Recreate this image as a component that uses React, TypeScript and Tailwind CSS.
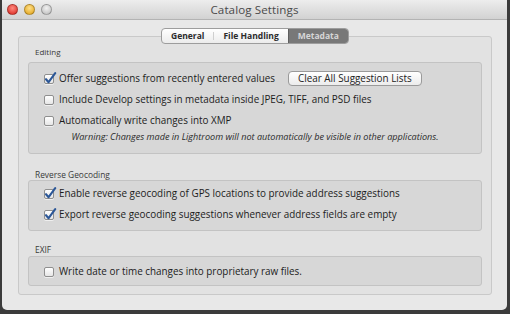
import React from 'react';

const font = { fontFamily: '"Open Sans", "DejaVu Sans", sans-serif' };

function Check({ checked }: { checked?: boolean }) {
  return (
    <div className="relative w-[10px] h-[10px] shrink-0 rounded-[2px] border border-[#8f8f8f] bg-gradient-to-b from-white to-[#e6e6e6] shadow-[0_1px_0_rgba(255,255,255,0.6)]">
      {checked && (
        <svg className="absolute -top-[3px] -left-[1px]" width="13" height="13" viewBox="0 0 13 13">
          <path d="M2 7.2 L4.6 10.2 L11.2 1.2" fill="none" stroke="#2c5797" strokeWidth="2.1" strokeLinecap="round" strokeLinejoin="round" />
        </svg>
      )}
    </div>
  );
}

function Row({ checked, label, children }: { checked?: boolean; label: string; children?: React.ReactNode }) {
  return (
    <div className="flex items-center h-[21px] pl-[15px]">
      <Check checked={checked} />
      <span className="ml-[5px] text-[9.9px] text-[#1c1c1c] whitespace-nowrap">{label}</span>
      {children}
    </div>
  );
}

function Light({ color }: { color: string }) {
  return <div className={`w-[11px] h-[11px] rounded-full border border-black/25 ${color}`} />;
}

export default function App() {
  return (
    <div className="w-[510px] h-[314px] bg-[#3b3b3b] pl-[2px] pr-[3px] pb-[4px] overflow-hidden" style={font}>
      <div className="flex flex-col h-full rounded-b-[5px] bg-[#e8e8e8]">
        {/* title bar */}
        <div className="grid grid-cols-[1fr_auto_1fr] items-center h-[20px] bg-gradient-to-b from-[#ededed] to-[#d2d2d2] border-b border-[#b3b3b3]">
          <div className="flex items-center gap-[6px] pl-[5px]">
            <Light color="bg-[radial-gradient(circle_at_50%_35%,#ff8a80,#d9241c)]" />
            <Light color="bg-[radial-gradient(circle_at_50%_35%,#ffe08a,#e0a014)]" />
            <Light color="bg-[radial-gradient(circle_at_50%_35%,#f2f2f2,#b9b9b9)]" />
          </div>
          <div className="text-[11.6px] text-[#4a4a4a] tracking-[0.1px]">Catalog Settings</div>
          <div />
        </div>

        <div className="pt-[8px] pl-[16px] pr-[15px]">
          {/* tabs */}
          <div className="relative z-10 flex justify-center">
            <div className="flex h-[16px] rounded-[4px] border border-[#9d9d9d] bg-gradient-to-b from-white to-[#ececec] text-[8.5px] font-bold text-[#2b2b2b] overflow-hidden">
              <div className="flex items-center px-[9px] border-r border-[#cfcfcf] my-[3px]">General</div>
              <div className="flex items-center px-[9px]">File Handling</div>
              <div className="flex items-center px-[9px] bg-[#787878] text-[#d6d6d6] border-l border-[#5f5f5f]">Metadata</div>
            </div>
          </div>

          {/* main box */}
          <div className="-mt-[8px] border border-[#c9c9c9] bg-[#e2e2e2] rounded-[3px] px-[9px] pt-[10px] pb-[8px]">
            <div className="text-[8px] leading-[10px] text-[#3a3a3a] pl-[7px]">Editing</div>
            <div className="mt-[5px] border border-[#c3c3c3] bg-[#d7d7d7] rounded-[3px] pt-[5px] pb-[10px]">
              <Row checked label="Offer suggestions from recently entered values">
                <div className="ml-[13px] flex items-center h-[15px] px-[9px] rounded-[4px] border border-[#9a9a9a] bg-gradient-to-b from-white to-[#ececec] text-[9.9px] text-[#222] whitespace-nowrap">
                  Clear All Suggestion Lists
                </div>
              </Row>
              <Row label="Include Develop settings in metadata inside JPEG, TIFF, and PSD files" />
              <Row label="Automatically write changes into XMP" />
              <div className="h-[12px] leading-[12px] text-center italic text-[9.1px] text-[#2a2a2a] whitespace-nowrap">
                Warning: Changes made in Lightroom will not automatically be visible in other applications.
              </div>
            </div>

            <div className="mt-[16px] text-[8.4px] leading-[10px] text-[#3a3a3a] pl-[7px]">Reverse Geocoding</div>
            <div className="border border-[#c3c3c3] bg-[#d7d7d7] rounded-[3px] pt-[2px] pb-[5px]">
              <Row checked label="Enable reverse geocoding of GPS locations to provide address suggestions" />
              <Row checked label="Export reverse geocoding suggestions whenever address fields are empty" />
            </div>

            <div className="mt-[14px] text-[8.4px] leading-[10px] text-[#3a3a3a] pl-[7px]">EXIF</div>
            <div className="mt-[1px] border border-[#c3c3c3] bg-[#d7d7d7] rounded-[3px] pt-[4px] pb-[3px]">
              <Row label="Write date or time changes into proprietary raw files." />
            </div>
          </div>
        </div>
      </div>
    </div>
  );
}
